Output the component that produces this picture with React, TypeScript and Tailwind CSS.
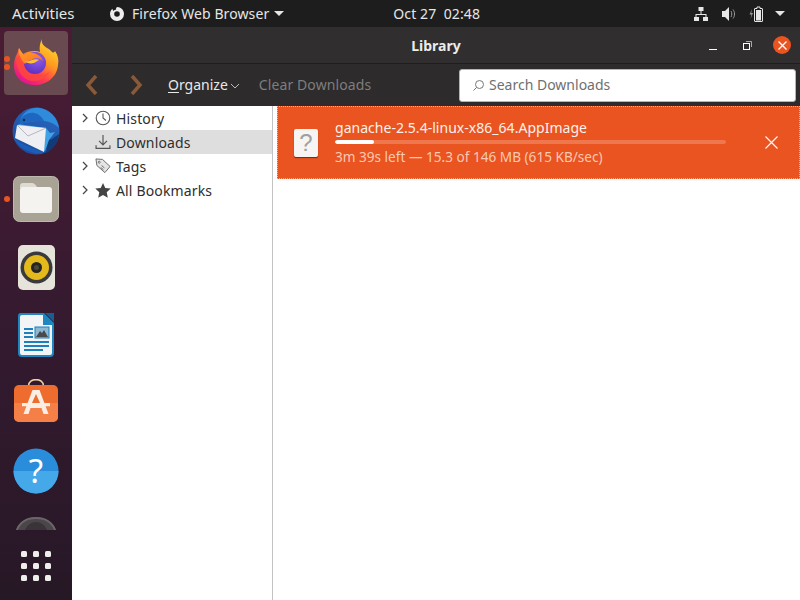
import React from "react";

const Chevron = ({ className = "" }: { className?: string }) => (
  <svg width="8" height="10" viewBox="0 0 8 10" className={className} fill="none" stroke="#444" strokeWidth="1.2"><path d="M2 1l4 4-4 4" /></svg>
);

const Firefox = () => (
  <svg width="48" height="48" viewBox="0 0 48 48">
    <defs>
      <linearGradient id="ffb" x1="0.85" y1="0.05" x2="0.25" y2="0.95">
        <stop offset="0" stopColor="#ffdc32" />
        <stop offset="0.4" stopColor="#ff9a20" />
        <stop offset="0.72" stopColor="#ff3d4d" />
        <stop offset="1" stopColor="#e5148f" />
      </linearGradient>
      <linearGradient id="ffh" x1="0" y1="0" x2="1" y2="1">
        <stop offset="0" stopColor="#ffa62a" />
        <stop offset="1" stopColor="#ff6a1e" />
      </linearGradient>
      <radialGradient id="ffp" cx="0.6" cy="0.3" r="0.8">
        <stop offset="0" stopColor="#8f5ff2" />
        <stop offset="1" stopColor="#5a2ab8" />
      </radialGradient>
    </defs>
    <path d="M30 0c-1 4 1 6 5 9 2 1 3 2 4 3 2 2 3 2 4 0 3 4 4 9 3 14-1 12-11 20-23 20C10 46 2 38 2 27c0-5 1-9 3-12 1-2 1-4 2-6 1 2 3 4 4 6 3-2 7-3 11-3 2 0 4 0 6 1-1-5 0-9 2-13z" fill="url(#ffb)" />
    <path d="M4 20c2-3 6-4 8-3 1 7 5 14 12 18 5 2 10 1 14-3-3 6-9 10-16 10C12 42 5 34 4 20z" fill="#ff4a3a" opacity="0.75" />
    <circle cx="23" cy="24" r="11" fill="url(#ffp)" />
    <path d="M7 9c1 3 3 5 5 7 4-3 10-3 14 0 2 1 4 3 5 6-3-3-7-4-10-2-3 2-6 2-8 5-3-3-7-9-6-16z" fill="url(#ffh)" />
    <path d="M12 22c3 1 6 0 8-1 2-1 5-1 7 0-2 1-3 2-5 3-4 1-7 0-10-2z" fill="#ffc233" />
  </svg>
);

const Thunderbird = () => (
  <svg width="48" height="48" viewBox="0 0 48 48">
    <defs>
      <linearGradient id="tb" x1="0.8" y1="0" x2="0.2" y2="1">
        <stop offset="0" stopColor="#2a68c0" />
        <stop offset="1" stopColor="#1a4c9c" />
      </linearGradient>
    </defs>
    <circle cx="24" cy="24" r="23.500" fill="url(#tb)" />
    <path d="M34 46c7-3 12-10 13-19l-7 5-4 1-1 6z" fill="#113a78" />
    <path d="M8 13C12 4 20 0 28 1c10 2 17 9 19 20-6-6-14-8-22-7-6 1-12 1-17 3z" fill="#2f8bdc" />
    <path d="M8 13c3-5 9-8 14-7 5 1 8 4 10 8-8 0-17 1-24 3z" fill="#1f66c0" />
    <path d="M6 17l28 4 4 5 5-1-6 8-4 11-5-1z" fill="#3fa2e6" />
    <path d="M5 18l29 3-2 24L3 31z" fill="#efeff3" />
    <path d="M5 18l11 11 18-8" fill="none" stroke="#b5b5bd" strokeWidth="1" />
    <path d="M1 30c4 3 7 6 12 8 6 3 13 5 18 7l-1 2C16 46 5 40 1 30z" fill="#1d5cb8" />
    <circle cx="12" cy="13" r="1.200" fill="#0f2a52" />
  </svg>
);

const Files = () => (
  <svg width="46" height="46" viewBox="0 0 46 46">
    <rect x="0.500" y="0.500" width="45" height="45" rx="6" fill="#a8a394" stroke="#bdb9ac" />
    <path d="M7 10a3 3 0 013-3h9c2 0 3 1 5 4l1 1H7z" fill="#dedbd2" />
    <path d="M7 14c0-2 1-3 3-3h26c2 0 3 1 3 3v20c0 2-1 3-3 3H10c-2 0-3-1-3-3z" fill="#f4f3ef" />
  </svg>
);

const Rhythmbox = () => (
  <svg width="37" height="45" viewBox="0 0 37 45">
    <rect x="0" y="0" width="37" height="45" rx="5" fill="#e6e3da" />
    <circle cx="18.500" cy="22.500" r="16" fill="#3a3a3c" />
    <circle cx="18.500" cy="22.500" r="12.500" fill="#e3b91c" />
    <circle cx="18.500" cy="22.500" r="5.500" fill="#26241f" />
    <circle cx="18.500" cy="22.500" r="2.500" fill="#4a463c" />
  </svg>
);

const Writer = () => (
  <svg width="38" height="46" viewBox="0 0 38 46">
    <path d="M3 1h24l10 10v30a4 4 0 01-4 4H5a4 4 0 01-4-4V4a3 3 0 012-3z" fill="#1f86c0" />
    <path d="M5 3h21v10h9v28a2 2 0 01-2 2H5a2 2 0 01-2-2V5a2 2 0 012-2z" fill="#f2f4f5" />
    <path d="M28 1l9 0v9z" fill="#165f8f" />
    <g fill="#1b80bb">
      <rect x="7" y="16" width="9" height="2" />
      <rect x="7" y="20" width="9" height="2" />
      <rect x="7" y="24" width="9" height="2" />
      <rect x="7" y="29" width="25" height="2" />
      <rect x="7" y="33" width="25" height="2" />
      <rect x="7" y="37" width="19" height="2" />
    </g>
    <rect x="18" y="15" width="14" height="11" fill="#8cb8d3" stroke="#1b80bb" />
    <path d="M19 25l4-6 2 2 2-3 4 7z" fill="#4a4a4a" />
  </svg>
);

const Software = () => (
  <svg width="46" height="44" viewBox="0 0 46 44" className="mb-[4px]">
    <path d="M15.500 7c0-8.500 15-8.500 15 0" fill="none" stroke="#f0d0a4" strokeWidth="1.600" />
    <rect x="1" y="6" width="44" height="37" rx="5" fill="#ee6d2e" />
    <path d="M1 24h44v14a5 5 0 01-5 5H6a5 5 0 01-5-5z" fill="#f48048" />
    <path d="M19.500 11h7l9 24h-5l-2-6H17.500l-2 6h-5z" fill="#fbeee4" />
    <rect x="9" y="24" width="28" height="3.200" fill="#fbeee4" />
    <path d="M23 15l-4 9h8z" fill="#ee6d2e" />
  </svg>
);

const Help = () => (
  <svg width="46" height="46" viewBox="0 0 46 46">
    <circle cx="23" cy="23" r="22.500" fill="#2a8ddb" />
    <path d="M.5 23h45a22.500 22.500 0 01-45 0z" fill="#45a8e8" />
    <text x="23" y="35" fontFamily="Noto Sans, sans-serif" fontSize="33" textAnchor="middle" fill="#fff">?</text>
  </svg>
);

const Trash = () => (
  <svg width="40" height="13" viewBox="0 0 40 13">
    <path d="M0 13C3 4 11 0 20 0s17 4 20 13z" fill="#4a4649" />
    <path d="M9 13c2-5 6-8 11-8s9 3 11 8z" fill="#3a3438" />
    <path d="M0 13C3 4 11 0 20 0s17 4 20 13h-2C35 5 28 2 20 2S5 5 2 13z" fill="#6a676a" />
  </svg>
);

const Dot = () => <span className="block w-[6px] h-[6px] rounded-full bg-[#e95420]" />;

const Slot = ({ children, dots = 0 }: { children: React.ReactNode; dots?: number }) => (
  <div className="relative h-[68px] w-[72px] flex items-center justify-center">
    {dots > 0 && (
      <div className="absolute left-[4px] top-0 bottom-0 flex flex-col justify-center gap-[2px]">
        {Array.from({ length: dots }).map((_, i) => <Dot key={i} />)}
      </div>
    )}
    {children}
  </div>
);

const Dock = () => (
  <aside className="w-[72px] shrink-0 h-full overflow-hidden flex flex-col pt-[2px] bg-gradient-to-b from-[#4a1c34] via-[#351a30] to-[#271826]">
    <div className="relative h-[68px] w-[72px] flex items-center justify-center">
      <div className="w-[64px] h-[64px] rounded-[4px] bg-[#694a50] flex items-center justify-center">
        <Firefox />
      </div>
      <div className="absolute left-[4px] top-0 bottom-0 flex flex-col justify-center gap-[2px]">
        <Dot /><Dot />
      </div>
    </div>
    <Slot><Thunderbird /></Slot>
    <Slot dots={1}><Files /></Slot>
    <Slot><Rhythmbox /></Slot>
    <Slot><Writer /></Slot>
    <Slot><Software /></Slot>
    <Slot><Help /></Slot>
    <div className="h-[25px] flex justify-center pt-[12px] shrink-0"><Trash /></div>
    <div className="grid grid-cols-3 gap-[6px] w-fit mx-auto mt-[21px]">
      {Array.from({ length: 9 }).map((_, i) => (
        <span key={i} className="w-[6px] h-[6px] rounded-[1.5px] bg-[#eeeeec]" />
      ))}
    </div>
  </aside>
);

const TopBar = () => (
  <header className="h-[27px] shrink-0 bg-[#1d1d1d] text-[#e6e6e6] text-[14px] flex items-center relative">
    <span className="ml-[12px] w-[97px] text-[15px]">Activities</span>
    <svg width="16" height="16" viewBox="0 0 16 16">
      <path fillRule="evenodd" d="M8 1c4 .2 7 3 7 7a7 7 0 11-14 0c0-2 1-4 2.500-5.200C3.500 4 4 4.500 4.500 5 5 4.200 6 3.700 7.200 3.700 6.800 3 7 2 8 1zM8 5.200A2.800 2.800 0 108 10.800 2.800 2.800 0 008 5.200z" fill="#eee" />
    </svg>
    <span className="ml-[7px] tracking-[0.1px]">Firefox Web Browser</span>
    <span className="ml-[5px] w-0 h-0 border-l-[5px] border-r-[5px] border-t-[5px] border-l-transparent border-r-transparent border-t-[#e6e6e6]" />
    <span className="ml-[109px] tracking-[0.1px]">Oct 27&nbsp;&nbsp;02:48</span>
    <div className="ml-auto mr-[15px] flex items-center">
      <svg width="16" height="16" viewBox="0 0 16 16" fill="#e6e6e6">
        <rect x="5.500" y="1" width="5" height="4" />
        <rect x="1" y="11" width="5" height="4" />
        <rect x="10" y="11" width="5" height="4" />
        <path d="M7.500 5h1v3h5v3h-1V9h-9v2h-1V8h5z" />
      </svg>
      <svg width="16" height="16" viewBox="0 0 16 16" fill="#e6e6e6" className="ml-[12px]">
        <path d="M1 5h3l4-4v14l-4-4H1z" />
        <path d="M10 5c1 1.500 1 4.500 0 6M12 3.500c2 2.500 2 6.500 0 9" fill="none" stroke="#999" strokeWidth="1" />
      </svg>
      <svg width="16" height="16" viewBox="0 0 16 16" className="ml-[12px]">
        <path d="M3 3L.5 8.500h2L1.500 13 4 7H2.200z" fill="#999" />
        <path d="M6 2.500h2V1h3v1.500h2a.5.500 0 01.500.500v12a.5.500 0 01-.500.500H6a.5.500 0 01-.500-.500V3a.5.500 0 01.500-.500z" fill="none" stroke="#e6e6e6" />
        <rect x="7" y="4" width="5" height="10.500" fill="#e6e6e6" />
      </svg>
      <span className="ml-[10px] w-0 h-0 border-l-[5px] border-r-[5px] border-t-[5px] border-l-transparent border-r-transparent border-t-[#e6e6e6]" />
    </div>
  </header>
);

const TitleBar = () => (
  <div className="h-[37px] shrink-0 bg-[#302e2e] border-b border-[#1f1e1e] flex items-center relative">
    <span className="flex-1 text-center font-bold text-[14px] text-[#ececec]">Library</span>
    <div className="absolute right-[9px] top-0 bottom-0 flex items-center">
      <span className="block w-[8px] h-[1px] bg-white mt-[8px] mr-[26px]" />
      <svg width="9" height="9" viewBox="0 0 9 9" className="mr-[21px]" fill="none" stroke="#fff"><rect x="0.500" y="2.500" width="6" height="6" /><path d="M3 .5h5.500v5.500" stroke="#aaa" /></svg>
      <span className="w-[18px] h-[18px] rounded-full bg-[#e95420] flex items-center justify-center">
        <svg width="9" height="9" viewBox="0 0 9 9" stroke="#fff" strokeWidth="1.300"><path d="M.5.500l8 8M8.500.500l-8 8" /></svg>
      </span>
    </div>
  </div>
);

const ToolBar = () => (
  <div className="h-[42px] shrink-0 bg-[#2d2b2b] flex items-center text-[14px]">
    <svg width="14" height="22" viewBox="0 0 14 22" className="ml-[13px]" fill="none" stroke="#8a5a38" strokeWidth="3.500"><path d="M11 2L3 11l8 9" /></svg>
    <svg width="14" height="22" viewBox="0 0 14 22" className="ml-[30px]" fill="none" stroke="#8a5a38" strokeWidth="3.500"><path d="M3 2l8 9-8 9" /></svg>
    <span className="ml-[25px] mb-[2px] text-[#e8e8e8]"><span className="underline underline-offset-2">O</span>rganize</span>
    <svg width="10" height="6" viewBox="0 0 10 6" className="ml-[2px] mt-[1px]" fill="none" stroke="#bbb"><path d="M1 1l4 4 4-4" /></svg>
    <span className="ml-[19px] mb-[2px] text-[#7e7e7e] tracking-[0.1px]">Clear Downloads</span>
    <div className="ml-auto mr-[4px] w-[337px] h-[33px] bg-white border border-[#b5b5b5] rounded-[3px] flex items-center pl-[12px] text-[#6f6f6f]">
      <svg width="13" height="13" viewBox="0 0 13 13" fill="none" stroke="#777" className="mr-[4px]"><circle cx="7.500" cy="5.500" r="4" /><path d="M4.500 8.500L1.500 11.500" /></svg>
      <span className="mb-[2px]">Search Downloads</span>
    </div>
  </div>
);

const Row = ({ icon, label, expand = true, active = false }: { icon: React.ReactNode; label: string; expand?: boolean; active?: boolean }) => (
  <div className={`h-[24px] flex items-center text-[14px] text-[#2e2e2e] ${active ? "bg-[#dedede]" : ""}`}>
    <span className="w-[23px] pl-[9px] flex items-center">{expand && <Chevron />}</span>
    <span className="w-[16px] h-[16px] flex items-center justify-center">{icon}</span>
    <span className="ml-[5px] tracking-[0.15px]">{label}</span>
  </div>
);

const Sidebar = () => (
  <nav className="w-[201px] shrink-0 h-full bg-white border-r border-[#c2c2c2]">
    <Row label="History" icon={<svg width="16" height="16" viewBox="0 0 16 16" fill="none" stroke="#555" strokeWidth="1.100"><circle cx="8" cy="8" r="6.800" /><path d="M8 3.500V8l3 2.500" /></svg>} />
    <Row label="Downloads" active expand={false} icon={<svg width="16" height="16" viewBox="0 0 15 15" fill="none" stroke="#555" strokeWidth="1.100"><path d="M7.500 1v9M3.800 6.500l3.700 3.700 3.700-3.700M1 10.500v3h13v-3" /></svg>} />
    <Row label="Tags" icon={<svg width="18" height="18" viewBox="0 0 17 17" fill="#e4e4e4" stroke="#666" strokeWidth="1"><path d="M1 1l7 .5 8 7.500-5.500 6.500-8.500-7.500zM4.500 3.500a1 1 0 100 2 1 1 0 000-2zM7 8l3 2.500M6 10l3 2.500" /></svg>} />
    <Row label="All Bookmarks" icon={<svg width="17" height="17" viewBox="0 0 16 16" fill="#444"><path d="M8 .5l2.300 5 5.400.6-4 3.700 1.100 5.400L8 12.500l-4.800 2.700 1.100-5.400-4-3.700 5.400-.6z" /></svg>} />
  </nav>
);

const Download = () => (
  <div className="ml-[4px] h-[73px] bg-[#e95420] border border-dotted border-[#f5b08e] flex items-center text-white">
    <div className="ml-[16px] w-[24px] h-[28px] bg-[#f6f5f4] rounded-[2px] shadow-[0_1px_1px_rgba(90,30,0,0.8)] flex items-center justify-center text-[#a0a0a0] text-[24px] leading-none" style={{ fontFamily: "'Liberation Sans', sans-serif" }}>?</div>
    <div className="ml-[17px] w-[391px]">
      <div className="text-[14px] leading-[18px] mb-[3px] text-[#fdf1ea] tracking-[0.03px]">ganache-2.5.4-linux-x86_64.AppImage</div>
      <div className="h-[4px] rounded-full bg-[#ef774d] overflow-hidden"><div className="w-[39px] h-full bg-white rounded-full" /></div>
      <div className="text-[13.6px] leading-[18px] mt-[4px] text-[#f9c9b4]">3m 39s left — 15.3 of 146 MB (615 KB/sec)</div>
    </div>
    <svg width="13" height="13" viewBox="0 0 13 13" className="ml-[39px]" stroke="#fff" strokeWidth="1.100"><path d="M.5.500l12 12M12.500.500l-12 12" /></svg>
  </div>
);

export default function App() {
  return (
    <div className="w-[800px] h-[600px] overflow-hidden flex flex-col bg-white" style={{ fontFamily: "'Noto Sans', sans-serif" }}>
      <TopBar />
      <div className="flex-1 min-h-0 flex">
        <Dock />
        <main className="flex-1 min-w-0 flex flex-col">
          <TitleBar />
          <ToolBar />
          <div className="flex-1 min-h-0 flex">
            <Sidebar />
            <div className="flex-1 min-w-0"><Download /></div>
          </div>
        </main>
      </div>
    </div>
  );
}
